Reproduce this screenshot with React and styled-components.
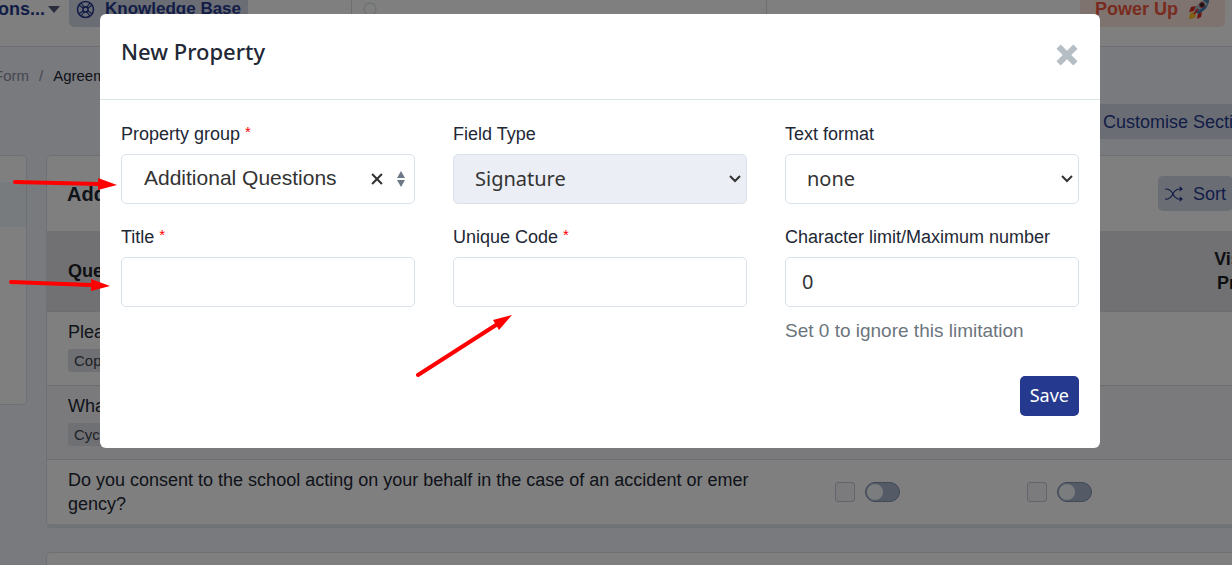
import React from 'react';
import styled, { createGlobalStyle } from 'styled-components';
import { BsShuffle } from 'react-icons/bs';

const colors = {
    navy: '#253a8e',
    ink: '#222735',
    page: '#f3f4fb',
    tint: '#d6daea',
    line: '#d9e2ea',
    tableHead: '#e2e3e9',
    stripe: '#f4f5f9',
    muted: '#6c757d',
    required: '#ff0000',
};

const sans = '"Liberation Sans", Arial, sans-serif';
const display = '"Noto Sans", sans-serif';

const GlobalStyle = createGlobalStyle`
    * {
        box-sizing: border-box;
    }

    body {
        margin: 0;
        overflow: hidden;
        font-family: ${sans};
        font-size: 18px;
        line-height: 24px;
        color: ${colors.ink};
        background: ${colors.page};
    }

    button,
    input,
    select {
        margin: 0;
        font: inherit;
        color: inherit;
    }

    svg {
        flex: none;
    }
`;

const Page = styled.div`
    height: 100vh;
    overflow: hidden;
    background: ${colors.page};
`;

/* Top bar */

const TopBar = styled.header`
    display: flex;
    align-items: flex-end;
    height: 47px;
    padding-bottom: 19px;
    overflow: hidden;
    background: #fff;
    border-bottom: 1px solid #dcdde4;
`;

const SchoolMenu = styled.button`
    display: flex;
    align-items: center;
    justify-content: flex-end;
    gap: 3px;
    width: 60px;
    height: 36px;
    padding: 0;
    border: 0;
    background: none;
    color: ${colors.navy};
    font-weight: bold;
`;

const KnowledgeLink = styled.a`
    display: flex;
    align-items: center;
    gap: 10px;
    height: 36px;
    margin-left: 9px;
    padding: 0 7px;
    border-radius: 5px;
    background: ${colors.tint};
    color: ${colors.navy};
    font-size: 17px;
    font-weight: bold;
    text-decoration: none;
    white-space: nowrap;
`;

const SearchBox = styled.div`
    display: flex;
    flex: 1;
    align-items: center;
    height: 36px;
    margin: 0 313px 0 103px;
    padding-left: 11px;
    border: solid #dcdde4;
    border-width: 0 1px;
`;

const PowerUp = styled.button`
    display: flex;
    flex: none;
    align-items: center;
    gap: 10px;
    height: 36px;
    margin-right: 7px;
    padding: 0 15px;
    border: 0;
    border-radius: 5px;
    background: #ffe6e0;
    color: #f0573c;
    font-weight: bold;
`;

/* Page behind the dialog */

const Breadcrumb = styled.nav`
    display: flex;
    gap: 10px;
    height: 57px;
    margin-left: -6px;
    padding-top: 17px;
    font-size: 15px;
    color: #8a8fa5;

    a {
        color: inherit;
        text-decoration: none;
    }

    a[aria-current] {
        color: ${colors.ink};
    }
`;

const PageActions = styled.div`
    display: flex;
    justify-content: flex-end;
    margin-right: -50px;
`;

const TintButton = styled.button`
    display: flex;
    align-items: center;
    gap: 10px;
    height: 35px;
    padding: 0 ${({ $pad }) => $pad}px;
    border: 0;
    border-radius: 5px;
    background: ${colors.tint};
    color: ${colors.navy};
    white-space: nowrap;
`;

const Columns = styled.main`
    display: flex;
    align-items: flex-start;
    gap: 19px;
    margin: 16px -116px 0 0;
`;

const SectionList = styled.aside`
    flex: none;
    width: 27px;
    height: 250px;
    padding-top: 26px;
    border: 1px solid ${colors.line};
    border-left: 0;
    border-radius: 0 5px 5px 0;
    background: #fff;
`;

const ActiveSection = styled.div`
    height: 45px;
    background: #f0f6fd;
`;

const Cards = styled.div`
    display: flex;
    flex: 1;
    flex-direction: column;
    gap: 24px;
`;

const Card = styled.section`
    min-height: 80px;
    border: 1px solid ${colors.line};
    border-radius: 5px;
    background: #fff;
`;

const CardHeader = styled.header`
    display: flex;
    align-items: center;
    justify-content: space-between;
    height: 75px;
    padding: 0 114px 0 20px;

    h2 {
        margin: 0;
        font-size: 20px;
    }
`;

const QuestionTable = styled.table`
    width: 100%;
    border-collapse: collapse;
    table-layout: fixed;

    th,
    td {
        padding: 0;
        text-align: center;
    }

    th:first-child,
    td:first-child {
        padding: 8px 21px;
        text-align: left;
    }

    th {
        height: 80px;
        background: ${colors.tableHead};
        color: #1d1e24;
    }

    td {
        border-top: 1px solid #d9dadf;
        word-break: break-all;
    }

    tbody tr:nth-child(2) {
        background: ${colors.stripe};
    }
`;

const CardFoot = styled.div`
    height: 3px;
    background: #e4e6ec;
`;

const OptionColumn = styled.col`
    width: 192px;
`;

const Tag = styled.span`
    display: block;
    width: fit-content;
    margin: 5px 0;
    padding: 0 6px;
    border-radius: 3px;
    background: #dfe0e6;
    color: #42454f;
    font-size: 15px;
    line-height: 23px;
`;

const Options = styled.div`
    display: flex;
    justify-content: center;
    gap: 10px;
`;

const Check = styled.input`
    appearance: none;
    width: 20px;
    height: 20px;
    border: 1px solid #c4c9da;
    border-radius: 3px;
    background: #f6f7fc;
`;

const Switch = styled.input`
    appearance: none;
    display: flex;
    align-items: center;
    width: 35px;
    height: 20px;
    padding: 0 1px;
    border: 1px solid #8292ad;
    border-radius: 10px;
    background: #a9b7cc;

    &::before {
        content: '';
        width: 16px;
        height: 16px;
        border-radius: 50%;
        background: #f6f8fb;
    }

    &:checked {
        justify-content: flex-end;
    }
`;

/* Dialog */

const Backdrop = styled.div`
    position: fixed;
    inset: 0;
    padding: 14px 132px 0 100px;
    background: rgba(0, 0, 0, 0.5);
`;

const Dialog = styled.form`
    border-radius: 6px;
    background: #fff;
`;

const DialogHeader = styled.header`
    display: flex;
    align-items: center;
    justify-content: space-between;
    height: 86px;
    padding: 0 21px 4px;
    border-bottom: 1px solid #dbe4e4;

    h1 {
        margin: 0;
        padding-bottom: 8px;
        font-family: ${display};
        font-size: 22px;
        font-weight: 500;
        line-height: 32px;
    }
`;

const IconButton = styled.button`
    display: flex;
    padding: ${({ $pad }) => $pad}px;
    border: 0;
    background: none;
    color: ${({ $color }) => $color};
`;

const DialogBody = styled.div`
    display: grid;
    grid-template-columns: repeat(3, 1fr);
    gap: 21px 38px;
    padding: 22px 21px 0;
`;

const Field = styled.div`
    display: flex;
    flex-direction: column;

    label {
        height: 24px;
        margin-bottom: 8px;
    }

    label span {
        color: ${colors.required};
        font-size: 15px;
        line-height: 20px;
        vertical-align: top;
    }

    small {
        margin-top: 12px;
        color: ${colors.muted};
        font-size: 19px;
    }
`;

const Control = styled.input`
    width: 100%;
    height: 50px;
    padding: 0 16px 2px;
    border: 1px solid ${colors.line};
    border-radius: 5px;
    background: #fff;
    color: #333;
    font-family: ${display};
    font-size: 20px;

    &:disabled {
        background: #ebeef4;
        opacity: 1;
    }
`;

const SelectFrame = styled.div`
    display: grid;
    align-items: center;

    > * {
        grid-area: 1 / 1;
    }

    select {
        appearance: none;
        padding: 0 30px 0 21px;
    }

    svg {
        justify-self: end;
        margin-right: 6px;
        pointer-events: none;
    }
`;

const GroupControl = styled.div`
    display: flex;
    align-items: center;
    gap: 5px;
    height: 50px;
    padding: 0 4px 0 22px;
    border: 1px solid ${colors.line};
    border-radius: 5px;
    color: #333;
`;

const GroupValue = styled.button`
    flex: 1;
    padding: 0 0 3px;
    border: 0;
    background: none;
    font-size: 21px;
    text-align: left;
    white-space: nowrap;
`;

const DialogFooter = styled.footer`
    display: flex;
    justify-content: flex-end;
    padding: 33px 21px 32px;
`;

const SaveButton = styled.button`
    height: 40px;
    padding: 0 10px 2px;
    border: 0;
    border-radius: 5px;
    background: ${colors.navy};
    color: #fff;
    font-family: ${display};
`;

const Arrows = styled.svg`
    position: fixed;
    top: 0;
    left: 0;
    pointer-events: none;
`;

const Lifebuoy = () => (
    <svg width="19" height="19" viewBox="0 0 19 19" fill="none" stroke="currentColor" aria-hidden="true">
        <circle cx="9.5" cy="9.5" r="8" strokeWidth="1.6" />
        <circle cx="9.5" cy="9.5" r="2.6" strokeWidth="1.6" />
        <path
            d="M3 5.2 7 8M5.2 3 8 7M16 5.2 12 8M13.8 3 11 7M3 13.8 7 11M5.2 16 8 12M16 13.8 12 11M13.8 16 11 12"
            strokeWidth="1.2"
        />
    </svg>
);

const Rocket = () => (
    <svg width="22" height="22" viewBox="0 0 22 22" aria-hidden="true">
        <path d="M8 8 3 9 1 14l5-1zM14 14l-1 5-4 2 1-6z" fill="#d92b20" />
        <path d="M5 14c-3 0-4 3-4 7 4 0 7-1 7-4z" fill="#ffc02e" />
        <path d="M21 1c-6 0-11 4-15 11l4 4c7-4 11-9 11-15z" fill="#a9bccb" />
        <path d="M20 6c-1 4-4 7-10 10l-2-2c6-3 9-6 12-8z" fill="#3b7fb5" />
        <path d="M21 1c-2 0-4 0-6 1l5 4c1-1 1-3 1-5z" fill="#4a7ea8" />
        <circle cx="14" cy="7" r="2.5" fill="#26252e" stroke="#c9403a" />
        <path d="m10 11-4 5" stroke="#d92b20" strokeWidth="2" />
    </svg>
);

const Cross = ({ size, weight }) => (
    <svg width={size} height={size} viewBox="0 0 20 20" aria-hidden="true">
        <path d="m3 3 14 14M17 3 3 17" stroke="currentColor" strokeWidth={weight} />
    </svg>
);

const Required = () => <span aria-hidden="true">*</span>;

const Select = ({ id, value, disabled }) => (
    <SelectFrame>
        <Control as="select" id={id} disabled={disabled}>
            <option>{value}</option>
        </Control>
        <svg width="12" height="8" viewBox="0 0 12 8" aria-hidden="true">
            <path d="m1 1 5 5 5-5" fill="none" stroke="#333" strokeWidth="2" />
        </svg>
    </SelectFrame>
);

const OptionCells = ({ name }) => ['first', 'second'].map((key) => (
    <td key={key}>
        <Options>
            <Check type="checkbox" aria-label={`${name} ${key} check`} />
            <Switch type="checkbox" role="switch" aria-label={`${name} ${key} switch`} />
        </Options>
    </td>
));

const questions = [
    { text: 'Please', tag: 'Copy' },
    { text: 'What', tag: 'Cycle' },
];

const QuestionsCard = () => (
    <Card>
        <CardHeader>
            <h2>Additional</h2>
            <TintButton type="button" $pad={7}>
                <BsShuffle size={18} />
                Sort
            </TintButton>
        </CardHeader>
        <QuestionTable>
            <colgroup>
                <col />
                <OptionColumn />
                <OptionColumn />
                <OptionColumn />
            </colgroup>
            <thead>
                <tr>
                    <th>Question</th>
                    <th aria-label="Check" />
                    <th aria-label="Switch" />
                    <th>
                        Visibility
                        <br />
                        Preview
                    </th>
                </tr>
            </thead>
            <tbody>
                {questions.map(({ text, tag }) => (
                    <tr key={text}>
                        <td>
                            {text}
                            <Tag>{tag}</Tag>
                        </td>
                        <td />
                        <td />
                        <td />
                    </tr>
                ))}
                <tr>
                    <td>
                        Do you consent to the school acting on your behalf in the case of an
                        accident or emergency?
                    </td>
                    <OptionCells name="Consent" />
                    <td />
                </tr>
            </tbody>
        </QuestionTable>
        <CardFoot />
    </Card>
);

const NewPropertyDialog = () => (
    <Backdrop>
        <Dialog role="dialog" aria-labelledby="dialog-title" onSubmit={(e) => e.preventDefault()}>
            <DialogHeader>
                <h1 id="dialog-title">New Property</h1>
                <IconButton type="button" aria-label="Close" $color="#b5bec5" $pad={0}>
                    <Cross size={24} weight={5} />
                </IconButton>
            </DialogHeader>
            <DialogBody>
                <Field>
                    <label htmlFor="group">Property group <Required /></label>
                    <GroupControl>
                        <GroupValue type="button" id="group">Additional Questions</GroupValue>
                        <IconButton type="button" aria-label="Clear" $color="#333" $pad={3}>
                            <Cross size={14} weight={3} />
                        </IconButton>
                        <svg width="18" height="16" viewBox="0 0 18 16" aria-hidden="true">
                            <path d="M5 7 9 0l4 7zM5 9l4 7 4-7z" fill="#6b7a86" />
                        </svg>
                    </GroupControl>
                </Field>
                <Field>
                    <label htmlFor="type">Field Type</label>
                    <Select id="type" value="Signature" disabled />
                </Field>
                <Field>
                    <label htmlFor="format">Text format</label>
                    <Select id="format" value="none" />
                </Field>
                <Field>
                    <label htmlFor="title">Title <Required /></label>
                    <Control id="title" type="text" />
                </Field>
                <Field>
                    <label htmlFor="code">Unique Code <Required /></label>
                    <Control id="code" type="text" />
                </Field>
                <Field>
                    <label htmlFor="limit">Character limit/Maximum number</label>
                    <Control id="limit" type="text" defaultValue="0" />
                    <small>Set 0 to ignore this limitation</small>
                </Field>
            </DialogBody>
            <DialogFooter>
                <SaveButton type="submit">Save</SaveButton>
            </DialogFooter>
        </Dialog>
    </Backdrop>
);

const App = () => (
    <>
        <GlobalStyle />
        <Page>
            <TopBar>
                <SchoolMenu type="button">
                    ons...
                    <svg width="12" height="7" viewBox="0 0 12 7" aria-hidden="true">
                        <path d="M0 0h12L6 7z" fill="#55597a" />
                    </svg>
                </SchoolMenu>
                <KnowledgeLink href="#knowledge">
                    <Lifebuoy />
                    Knowledge Base
                </KnowledgeLink>
                <SearchBox>
                    <svg width="16" height="16" viewBox="0 0 16 16" aria-hidden="true">
                        <circle cx="7" cy="8" r="6" fill="none" stroke="#dde6e8" strokeWidth="1.5" />
                    </svg>
                </SearchBox>
                <PowerUp type="button">
                    Power Up
                    <Rocket />
                </PowerUp>
            </TopBar>
            <Breadcrumb aria-label="Breadcrumb">
                <a href="#form">Form</a>
                <span>/</span>
                <a href="#agreement" aria-current="page">Agreement</a>
            </Breadcrumb>
            <PageActions>
                <TintButton type="button" $pad={20}>Customise Sections</TintButton>
            </PageActions>
            <Columns>
                <SectionList>
                    <ActiveSection />
                </SectionList>
                <Cards>
                    <QuestionsCard />
                    <Card />
                </Cards>
            </Columns>
        </Page>
        <NewPropertyDialog />
        <Arrows width="1232" height="565" aria-hidden="true">
            <g stroke="#f00" strokeWidth="4" strokeLinecap="round" fill="#f00">
                <path d="m15 182 84 2M11 282l80 3M418 375l78-50" />
                <path d="m98 178 19 7-19 5zM91 279l19 7-19 5zM493 320l19-5-13 15z" stroke="none" />
            </g>
        </Arrows>
    </>
);

export default App;
